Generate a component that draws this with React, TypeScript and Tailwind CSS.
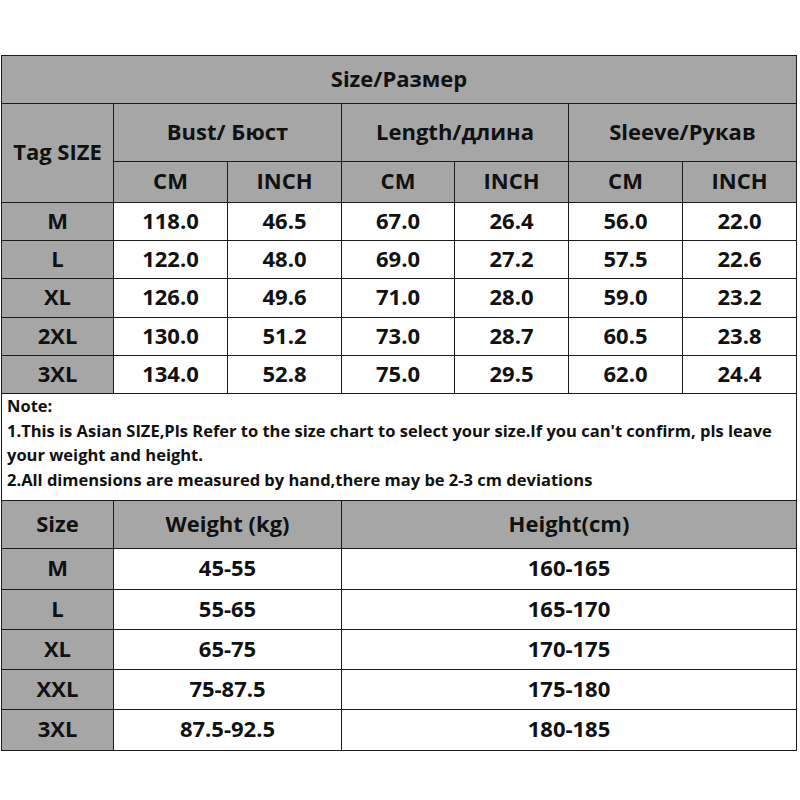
import React from "react";

const G = "bg-[#a6a6a6]";
const W = "bg-white";
const cell = "flex items-center justify-center pb-[4px] text-[22px] font-bold text-[#111] leading-none";

const rows = [
  ["M", "118.0", "46.5", "67.0", "26.4", "56.0", "22.0"],
  ["L", "122.0", "48.0", "69.0", "27.2", "57.5", "22.6"],
  ["XL", "126.0", "49.6", "71.0", "28.0", "59.0", "23.2"],
  ["2XL", "130.0", "51.2", "73.0", "28.7", "60.5", "23.8"],
  ["3XL", "134.0", "52.8", "75.0", "29.5", "62.0", "24.4"],
];

const rows2 = [
  ["M", "45-55", "160-165"],
  ["L", "55-65", "165-170"],
  ["XL", "65-75", "170-175"],
  ["XXL", "75-87.5", "175-180"],
  ["3XL", "87.5-92.5", "180-185"],
];

export default function App() {
  return (
    <div className="w-[800px] h-[800px] bg-white" style={{ fontFamily: '"Open Sans", "Noto Sans", sans-serif' }}>
      <div className="pt-[55px] pl-px">
        <div className="grid w-fit gap-px p-px bg-[#1c1c1c] grid-cols-[111px_113px_113px_112px_113px_113px_113px] grid-rows-[47px_57px_40px_37px_37px_38px_37px_37px_106px_47px_40px_39px_39px_39px_40px]">
          <div className={`${cell} ${G} col-span-7`}>Size/Размер</div>
          <div className={`${cell} ${G} row-span-2`}>Tag SIZE</div>
          <div className={`${cell} ${G} col-span-2`}>Bust/ Бюст</div>
          <div className={`${cell} ${G} col-span-2`}>Length/длина</div>
          <div className={`${cell} ${G} col-span-2`}>Sleeve/Рукав</div>
          {["CM", "INCH", "CM", "INCH", "CM", "INCH"].map((t, i) => (
            <div key={i} className={`${cell} ${G}`}>{t}</div>
          ))}
          {rows.map((r, ri) =>
            r.map((t, ci) => (
              <div key={`${ri}-${ci}`} className={`${cell} ${ci === 0 ? G : W}`}>{t}</div>
            ))
          )}
          <div className="col-span-7 bg-white px-[5px] text-[16.5px] font-bold text-[#111] leading-[24.5px]">
            <div>Note:</div>
            <div>1.This is Asian SIZE,Pls Refer to the size chart to select your size.If you can't confirm, pls leave your weight and height.</div>
            <div>2.All dimensions are measured by hand,there may be 2-3 cm deviations</div>
          </div>
          <div className={`${cell} ${G}`}>Size</div>
          <div className={`${cell} ${G} col-span-2`}>Weight (kg)</div>
          <div className={`${cell} ${G} col-span-4`}>Height(cm)</div>
          {rows2.map((r, ri) => (
            <React.Fragment key={ri}>
              <div className={`${cell} ${G}`}>{r[0]}</div>
              <div className={`${cell} ${W} col-span-2`}>{r[1]}</div>
              <div className={`${cell} ${W} col-span-4`}>{r[2]}</div>
            </React.Fragment>
          ))}
        </div>
      </div>
    </div>
  );
}
